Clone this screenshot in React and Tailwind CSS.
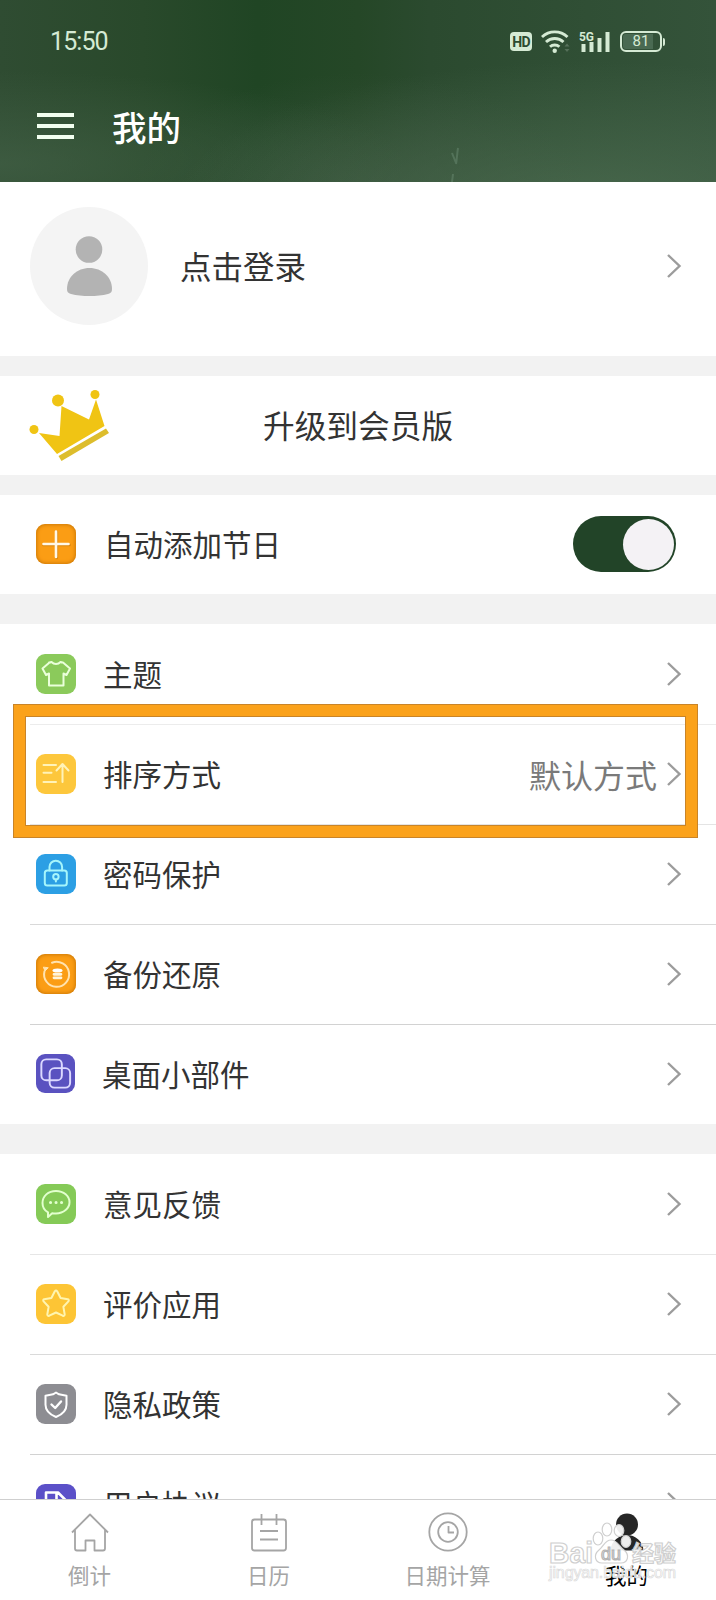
const rowsA = [
  { icon: "shirt", label: "主题" },
  { icon: "sort", label: "排序方式", value: "默认方式", line: "border-[#ececec]" },
  { icon: "lock", label: "密码保护", line: "border-[#e4e4e4]" },
  { icon: "backup", label: "备份还原", line: "border-[#d9d9d9]" },
  { icon: "widget", label: "桌面小部件", line: "border-[#d2d2d2]" },
]

const rowsB = [
  { icon: "chat", label: "意见反馈" },
  { icon: "star", label: "评价应用", line: "border-[#e6e6e6]" },
  { icon: "shield", label: "隐私政策", line: "border-[#dadada]" },
  { icon: "doc", label: "用户协议", line: "border-[#d2d2d2]" },
]

const tileColors = {
  plus: "h-10 w-10 bg-[#fb9d14] shadow-[inset_0_0_4px_#b96a00]",
  shirt: "h-10 w-10 bg-[#8bca5b]",
  sort: "h-10 w-10 bg-[#fdc73c]",
  lock: "h-10 w-10 bg-[#2c9fe4]",
  backup: "h-10 w-10 bg-[#fb9d14] shadow-[inset_0_0_4px_#b96a00]",
  widget: "h-[39px] w-[39px] bg-[#5a52c0]",
  chat: "h-10 w-10 bg-[#85ca57]",
  star: "h-10 w-10 bg-[#fdc535]",
  shield: "h-10 w-10 bg-[#8d8d92]",
  doc: "h-10 w-10 bg-[#5b50c8]",
}

const glyphs = {
  plus: (
    <>
      <path d="M7.500 21h26M20.800 8v26" stroke="#b9700e" strokeWidth="2.600" opacity="0.5" />
      <path d="M7.500 20h25M20 7.500v25.500" stroke="#fff8e8" strokeWidth="2.600" />
    </>
  ),
  shirt: (
    <path stroke="#eaffda" d="M13.500 8.500L6.500 14.500l3.500 6.500 3-1.500V31.500h14.500V19.500l3 1.500 3.500-6.500-7-6c-1 0-1.500 0-2.500-.5-2.500 2.600-6.500 2.600-9 0-1 .5-1.500.5-2.500.5z" />
  ),
  sort: (
    <g stroke="#fff3b8">
      <path d="M7.500 11h12.500M7.500 18.800h8M7.500 28h12.500M26.500 28V10.500M20.500 16.500l6-6.500 6 6.500" />
    </g>
  ),
  lock: (
    <g stroke="#a6f5fb">
      <rect x="8.800" y="16.500" width="22" height="15" rx="2.500" />
      <path d="M13.500 16.500v-3.500a6.300 6.300 0 0 1 12.600 0v3.500M19.900 25.500v2" />
      <circle cx="19.900" cy="22.800" r="2.700" />
    </g>
  ),
  backup: (
    <g stroke="#ffe3b0">
      <path d="M16 8.700a12.500 12.500 0 1 1-7.500 8.500" />
      <path d="M7.500 13.500l1.500 3.500 3-3z" fill="#ffe3b0" strokeWidth="1" />
      <ellipse cx="21.500" cy="16.500" rx="5" ry="2" fill="#fff" stroke="none" />
      <path strokeWidth="2.800" stroke="#fff5dc" d="M18 20.300h7M18 23.800h7" />
    </g>
  ),
  widget: (
    <g stroke="#dcd9ff">
      <rect x="5.500" y="5.500" width="21" height="21.500" rx="5" />
      <rect x="14" y="14.500" width="21" height="20" rx="5" />
    </g>
  ),
  chat: (
    <g stroke="#e2ffce">
      <path d="M12 28.300c-3.700-2-5.500-5.300-5.500-9.300 0-7 5.700-12 13.500-12s13.500 5.200 13.500 11.200S27.700 29.500 20 29.500c-1.300 0-2.500 0-3.800-.3L12 33z" />
      <path strokeWidth="3" d="M14.500 18.500h.1M20 18.500h.1M25.500 18.500h.1" />
    </g>
  ),
  star: (
    <path stroke="#fff5b0" d="M18.800 7.300q1.200-1.600 2.400 0l3.400 6.700 7.200 1.200q1.600.6.600 2.200l-5 5.400 1.300 7.700q-.2 1.900-2 1.200L20 28.500l-6.700 3.200q-1.800.7-2-1.200l1.300-7.700-5-5.400q-1-1.600.6-2.200l7.200-1.200z" />
  ),
  shield: (
    <g stroke="#fff">
      <path d="M20 8.500l3 1.800 7.500 1.400v9c0 6-4 9.700-10.500 12.300C13.500 30.400 9.500 26.700 9.500 20.700v-9L17 10.300z" />
      <path strokeWidth="2.400" d="M15.500 20.500l3.700 3.500 5.800-6.500" />
    </g>
  ),
  doc: (
    <path stroke="#fff" strokeWidth="2.600" d="M10 32V8.500h12l8 8V32zM20.500 8.500V17h9" />
  ),
}

function Tile({ name }) {
  return (
    <div className={`shrink-0 rounded-[9px] ${tileColors[name]}`}>
      <svg viewBox="0 0 40 40" className="h-full w-full" fill="none" strokeWidth="2" strokeLinecap="round" strokeLinejoin="round">
        {glyphs[name]}
      </svg>
    </div>
  )
}

function Chevron() {
  return (
    <svg viewBox="0 0 16 26" className="h-[26px] w-4 shrink-0" fill="none" stroke="#9c9c9c" strokeWidth="2.400">
      <path d="M2 2l11.500 11L2 24" />
    </svg>
  )
}

function Row({ icon, label, value, line }) {
  return (
    <div className={`ml-[30px] flex h-[100px] items-center border-t pb-[2px] pl-1.5 pr-[34px] ${line || "border-transparent"}`}>
      <Tile name={icon} />
      <span className="ml-[27px] flex-1 text-[29.5px] leading-none">{label}</span>
      {value && <span className="mr-[9px] text-[32px] leading-none text-[#7a7a7a]">{value}</span>}
      <Chevron />
    </div>
  )
}

function StatusBar() {
  return (
    <div className="flex h-[84px] items-center pb-px pl-[50px] pr-[51px] text-[#d5ead4]">
      <span className="font-['Roboto'] text-[25px] leading-none tracking-[-0.9px]">15:50</span>
      <div className="ml-auto flex items-center">
        <span className="flex h-[19px] w-[22px] items-center justify-center rounded-[4px] bg-[#d5ead4] font-['Roboto'] text-[14px] font-bold leading-none tracking-[-0.8px] text-[#2c4a30]">HD</span>
        <svg viewBox="0 0 30 24" className="ml-[9px] h-6 w-[30px]" fill="none" stroke="currentColor" strokeWidth="2.900">
          <path d="M1 7a18.500 18.500 0 0 1 25.500 0M5 12a12.800 12.800 0 0 1 17.500 0M9 16.800a7 7 0 0 1 9.400 0" />
          <circle cx="13.700" cy="20.800" r="2.200" fill="currentColor" stroke="none" />
          <path d="M23.500 16.500l2.500-3 2.500 3zM23.500 19l2.500 3 2.500-3z" fill="#56705a" stroke="none" />
        </svg>
        <svg viewBox="0 0 32 24" className="ml-2 h-6 w-8 overflow-visible" fill="currentColor">
          <text x="0" y="10.500" fontSize="13.500" fontWeight="700" fontFamily="Roboto" textLength="15" lengthAdjust="spacingAndGlyphs">5G</text>
          <path d="M2.500 14h4v8h-4zM10.500 12h4v10h-4zM18.500 8h4v14h-4zM26.500 2h4v20h-4z" />
        </svg>
        <div className="ml-[9px] flex h-[21px] w-[42px] rounded-[6px] border-2 border-current p-[1px]">
          <span className="flex w-full items-center justify-center rounded-[3px] bg-[linear-gradient(90deg,#4a6a52_82%,transparent_82%)] font-['Roboto'] text-[15px] leading-none">81</span>
        </div>
        <div className="ml-px h-2 w-[2px] rounded-r bg-current" />
      </div>
    </div>
  )
}

function Header() {
  return (
    <header className="relative h-[182px] bg-[radial-gradient(ellipse_at_82%_115%,rgba(88,120,92,0.6),transparent_50%),radial-gradient(ellipse_at_0%_90%,rgba(70,100,74,0.6),transparent_40%),radial-gradient(ellipse_at_50%_110%,rgba(58,84,62,0.8),transparent_45%),linear-gradient(90deg,#2f4c32_0%,#29492b_20%,#204524_36%,#254727_50%,#2b4a2f_60%,#34533a_100%)]">
      <StatusBar />
      <div className="flex h-[84px] items-center pl-[37px] text-white">
        <div className="flex w-[37px] flex-col gap-[7px]">
          <i className="h-1 bg-[#f2fff0]" />
          <i className="h-1 bg-[#f2fff0]" />
          <i className="h-1 bg-[#f2fff0]" />
        </div>
        <h1 className="ml-[38px] text-[34.5px] font-medium leading-none">我的</h1>
      </div>
      {/* grass blade in the chalkboard backdrop */}
      <svg viewBox="0 0 16 36" className="absolute left-[448px] top-[146px] h-9 w-4" fill="none" stroke="#63836a" strokeWidth="2" opacity="0.6">
        <path d="M10 2c-1 6-1 11-2 16M4 7l4 10M5 28l-1 8" />
      </svg>
    </header>
  )
}

function Tab({ label, children }) {
  return (
    <div className="flex flex-1 flex-col items-center pt-[12px] text-[#a5a5a5]">
      <svg viewBox="0 0 40 40" className="h-10 w-10" fill="none" stroke="currentColor" strokeWidth="1.800" strokeLinejoin="round">
        {children}
      </svg>
      <span className="mt-[12px] text-[21.5px] leading-none">{label}</span>
    </div>
  )
}

function Watermark() {
  return (
    <svg viewBox="0 0 140 66" className="absolute left-[547px] top-[20px] h-[66px] w-[140px]" fontFamily="'Liberation Sans','Noto Sans CJK SC',sans-serif">
      <g fill="#fff" fillOpacity="0.92" stroke="#cfcfcf" strokeWidth="1.200">
        <ellipse cx="51" cy="18.500" rx="4.800" ry="6.500" />
        <ellipse cx="60" cy="9.500" rx="4.800" ry="6.500" />
        <ellipse cx="72" cy="10.500" rx="4.800" ry="6" />
        <ellipse cx="79" cy="21.500" rx="4.800" ry="6" />
        <path d="M64 20c6 0 8 6 13 10 6 5 4 13-3 13H55c-7 0-9-8-3-13 5-4 6-10 12-10z" />
        <text x="2" y="43" fontSize="29" fontWeight="700" textLength="44" lengthAdjust="spacingAndGlyphs">Bai</text>
        <text x="54" y="40" fontSize="18" stroke="#b4b4b4" textLength="20">du</text>
        <text x="85" y="41" fontSize="22" fontWeight="700">经验</text>
      </g>
      <text x="2" y="58" fontSize="16" fill="#fff" fillOpacity="0.85" stroke="#dadada" strokeWidth="0.700" textLength="127">jingyan.baidu.com</text>
    </svg>
  )
}

function TabBar() {
  return (
    <nav className="relative flex h-[101px] shrink-0 border-t border-[#cfcfcf] bg-white">
      <Tab label="倒计">
        <path d="M2 20.500L20 2.500l18 18M5 18v18.500q0 2 2 2h8.500V28.500h9v10H33q2 0 2-2V18" />
      </Tab>
      <Tab label="日历">
        <rect x="3" y="7.500" width="34" height="31" rx="2.500" />
        <path d="M12.500 2v11M27.500 2v11M11 19h18M11 27.500h18" />
      </Tab>
      <Tab label="日期计算">
        <circle cx="20" cy="20" r="18.700" />
        <circle cx="20" cy="20" r="9.800" />
        <path d="M20.500 14v6.500H26" />
      </Tab>
      <div className="flex flex-1 flex-col items-center pt-[12px] text-black">
        <svg viewBox="0 0 40 40" className="h-10 w-10" fill="#262626">
          <circle cx="20" cy="12.500" r="11" />
          <path d="M3.500 38.500C4 29 12 23 20 23s16 6 16.500 15.500z" />
        </svg>
        <span className="mt-[12px] text-[21.5px] leading-none">我的</span>
      </div>
      <Watermark />
    </nav>
  )
}

export default function App() {
  return (
    <div className="flex h-[1600px] w-[716px] flex-col overflow-hidden bg-[#f2f2f2] font-['Noto_Sans_CJK_SC',sans-serif] text-[#333]">
      <Header />
      <main className="relative h-[1317px] overflow-hidden">
        <section className="flex h-[174px] items-center bg-white pb-[6px] pl-[30px] pr-[34px]">
          <svg viewBox="0 0 118 118" className="h-[118px] w-[118px]">
            <circle cx="59" cy="59" r="59" fill="#f4f4f4" />
            <circle cx="59" cy="42.500" r="13.300" fill="#b3b3b3" />
            <path d="M37 82c0-12 10-21 22.500-21S82 70 82 82c0 3-1 4-4 5-11 2.800-26 2.800-37 0-3-1-4-2-4-5z" fill="#b3b3b3" />
          </svg>
          <span className="ml-8 flex-1 text-[31.5px] leading-none">点击登录</span>
          <Chevron />
        </section>

        <section className="relative mt-[20px] flex h-[99px] items-center justify-center bg-white pb-[2px]">
          <svg viewBox="0 0 80 74" className="absolute left-[29px] top-[12px] h-[74px] w-20" fill="#f0c414">
            <circle cx="5" cy="41.500" r="4.500" />
            <circle cx="29" cy="12.500" r="6" />
            <circle cx="66" cy="6.500" r="4.500" />
            <path d="M10 45l20.500 3 2-30L60 31.500l7-20L75.500 38 28 66z" />
            <path d="M29.500 68L77 40.500l3 4.500-47.500 28z" fill="#ddbd2c" />
          </svg>
          <span className="text-[31.7px] leading-none">升级到会员版</span>
        </section>

        <section className="mt-[20px] flex h-[99px] items-center bg-white pb-px pl-9 pr-10">
          <Tile name="plus" />
          <span className="ml-[28px] flex-1 pb-px text-[29.5px] leading-none">自动添加节日</span>
          <div className="flex h-14 w-[103px] items-center justify-end rounded-full bg-[#224428] pr-[2px]">
            <div className="h-[51px] w-[51px] rounded-full bg-[#f4f2f5]" />
          </div>
        </section>

        <section className="mt-[30px] bg-white">
          {rowsA.map(r => <Row key={r.label} {...r} />)}
        </section>

        <section className="mt-[30px] bg-white">
          {rowsB.map(r => <Row key={r.label} {...r} />)}
        </section>

        {/* highlight around the sort row */}
        <div className="absolute left-[13px] top-[522px] h-[134px] w-[685px] border-[12px] border-[#fba21b] outline outline-1 -outline-offset-1 outline-[#c98428] shadow-[inset_0_0_0_1px_#c98428]" />
      </main>
      <TabBar />
    </div>
  )
}
